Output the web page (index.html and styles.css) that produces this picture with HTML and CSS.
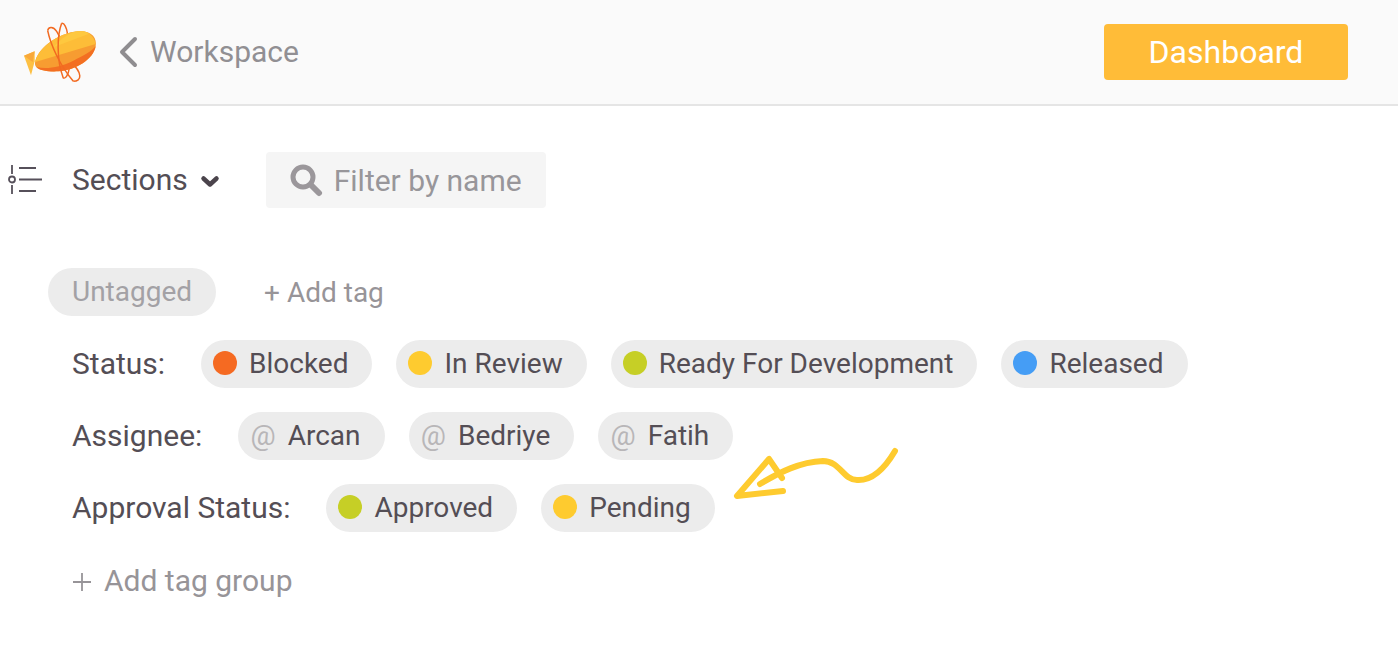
FILE: index.html
```html
<!DOCTYPE html>
<html lang="en">
<head>
<meta charset="utf-8">
<title>Workspace</title>
<link rel="stylesheet" href="styles.css">
</head>
<body>
<header class="topbar">
  <svg class="logo" width="84" height="68" viewBox="0 0 252 204">
    <g fill="none" stroke="#f26a21" stroke-width="4.500">
      <path d="M83 38 C85 25 100 25 110 40 C125 65 140 100 150 130 C190 165 185 190 160 190"/>
      <path d="M125 16 C133 14 140 30 142 45 L148 150 C145 170 137 182 130 181"/>
    </g>
    <path d="M12 113 L44 100 L44 130 L33 172 Z" fill="#fdc043"/>
    <path d="M12 113 L44 100 L38 132 Z" fill="#f9a83a"/>
    <path d="M45 135 C50 95 110 45 175 40 C215 37 232 60 227 85 C220 125 165 158 115 160 C75 162 42 155 45 135 Z" fill="#f79c31"/>
    <path d="M45 135 C50 95 110 45 175 40 C200 38 222 50 227 78 L46 132 Z" fill="#fdbd38"/>
    <path d="M100 88 C125 60 150 43 175 40 C190 39 198 40 207 47 Z" fill="#fec83f"/>
    <path d="M227 85 C220 125 165 158 115 160 C85 162 58 157 49 147 C80 154 120 148 160 128 C190 113 215 100 227 85 Z" fill="#f36f22"/>
    <g fill="none" stroke="#f26a21" stroke-width="4.500">
      <path d="M83 38 C92 80 118 140 160 190"/>
      <path d="M125 16 C112 50 108 120 130 181"/>
    </g>
  </svg>
  <a class="back">
    <svg width="20" height="32" viewBox="0 0 20 32"><path d="M17 3 L4 16 L17 29" fill="none" stroke="#8f8d90" stroke-width="4" stroke-linecap="round" stroke-linejoin="round"/></svg>
    <span class="back-text">Workspace</span>
  </a>
  <button class="dash">Dashboard</button>
</header>
<main class="content">
  <div class="tools">
    <svg class="list-icon" width="34" height="32" viewBox="0 0 34 32">
      <path d="M4 1 V10 M4 21 V30" stroke="#56505a" stroke-width="1.800" fill="none"/>
      <circle cx="4" cy="15.500" r="3" stroke="#56505a" stroke-width="1.800" fill="none"/>
      <path d="M11 4 H28 M11 15.500 H34 M11 27 H28" stroke="#56505a" stroke-width="1.800" fill="none"/>
    </svg>
    <div class="sections">
      <span class="sections-text">Sections</span>
      <svg class="caret" width="20" height="14" viewBox="0 0 20 14"><path d="M3.500 3.500 L10 9.500 L16.500 3.500" fill="none" stroke="#4b444c" stroke-width="4.500" stroke-linecap="round" stroke-linejoin="round"/></svg>
    </div>
    <div class="search">
      <svg width="34" height="34" viewBox="0 0 34 34"><circle cx="14" cy="14" r="10" fill="none" stroke="#9b979b" stroke-width="5"/><path d="M22 22 L30 30" stroke="#9b979b" stroke-width="6" stroke-linecap="round"/></svg>
      <span>Filter by name</span>
    </div>
  </div>
  <div class="tagline first">
    <span class="pill untagged">Untagged</span>
    <span class="add">+ Add tag</span>
  </div>
  <div class="tagline">
    <span class="label">Status:</span>
    <span class="pill"><i class="dot red"></i>Blocked</span>
    <span class="pill"><i class="dot yellow"></i>In Review</span>
    <span class="pill"><i class="dot green"></i>Ready For Development</span>
    <span class="pill"><i class="dot blue"></i>Released</span>
  </div>
  <div class="tagline">
    <span class="label">Assignee:</span>
    <span class="pill"><em class="at">@</em>Arcan</span>
    <span class="pill"><em class="at">@</em>Bedriye</span>
    <span class="pill"><em class="at">@</em>Fatih</span>
  </div>
  <div class="tagline">
    <span class="label">Approval Status:</span>
    <span class="pill"><i class="dot green"></i>Approved</span>
    <span class="pill"><i class="dot yellow"></i>Pending</span>
    <svg class="arrow" width="175" height="66" viewBox="0 0 175 66">
      <path d="M30 44 C50 32 70 22 93 21 C110 21 113 40 127 40 C142 41 155 28 165 11 M52 38 L39 19 L7 56 L53 51" fill="none" stroke="#fecb2f" stroke-width="6" stroke-linecap="round" stroke-linejoin="round"/>
    </svg>
  </div>
  <div class="add-group">
    <svg class="plus" width="20" height="20" viewBox="0 0 20 20"><path d="M10 1 V19 M1 10 H19" stroke="#979498" stroke-width="1.800"/></svg>
    <span>Add tag group</span>
  </div>
</main>
</body>
</html>
```
FILE: styles.css
```css
* { box-sizing: border-box; }
html, body { margin: 0; padding: 0; background: #fff; }
body { font-family: Roboto, "Liberation Sans", sans-serif; font-size: 28px; color: #544e55; height: 664px; overflow: hidden; }
.topbar { height: 106px; background: #fafafa; border-bottom: 2px solid #e5e5e5; display: flex; align-items: center; padding: 0 50px 0 20px; }
.logo { flex: none; }
.back { display: flex; align-items: center; gap: 12px; margin-left: 14px; color: #918f93; font-size: 30px; }
.back-text { margin-bottom: 2px; }
.dash { margin-left: auto; width: 244px; height: 56px; border: 0; padding: 0 0 1px; border-radius: 4px; background: #ffbc38; color: #fff; font: 400 32px Roboto, sans-serif; }
.content { padding: 46px 0 0 8px; }
.tools { display: flex; align-items: center; height: 56px; margin-bottom: 60px; }
.list-icon { flex: none; }
.sections { display: flex; align-items: center; gap: 12px; margin-left: 30px; font-size: 30px; }
.sections-text { margin-bottom: 2px; }
.caret { margin-top: 4px; }
.search { display: flex; align-items: center; gap: 11px; width: 280px; height: 56px; margin-left: 46px; padding-left: 23px; background: #f5f5f5; border-radius: 4px; color: #98969a; font-size: 30px; }
.tagline { display: flex; align-items: center; gap: 24px; height: 48px; margin-bottom: 24px; padding-left: 64px; position: relative; }
.tagline.first { padding-left: 40px; gap: 48px; }
.label { margin-right: 12px; margin-bottom: 2px; font-size: 30px; }
.pill { display: inline-flex; align-items: center; height: 48px; padding: 0 24px 2px 12px; border-radius: 24px; background: #ececec; white-space: nowrap; }
.pill.untagged { padding: 0 24px 2px; color: #a3a1a5; }
.add { color: #979498; }
.dot { width: 24px; height: 24px; border-radius: 50%; margin-right: 12px; flex: none; }
.red { background: #f56a22; }
.yellow { background: #fecb2f; }
.green { background: #c6cf26; }
.blue { background: #459df5; }
.at { font-style: normal; color: #b8b6b8; width: 25.400px; margin-right: 12px; text-align: center; }
.arrow { position: absolute; left: 722px; top: -44px; }
.add-group { display: flex; align-items: center; gap: 12px; padding-left: 64px; color: #979498; height: 48px; font-size: 30px; }
.plus { margin-top: 3px; }
```
